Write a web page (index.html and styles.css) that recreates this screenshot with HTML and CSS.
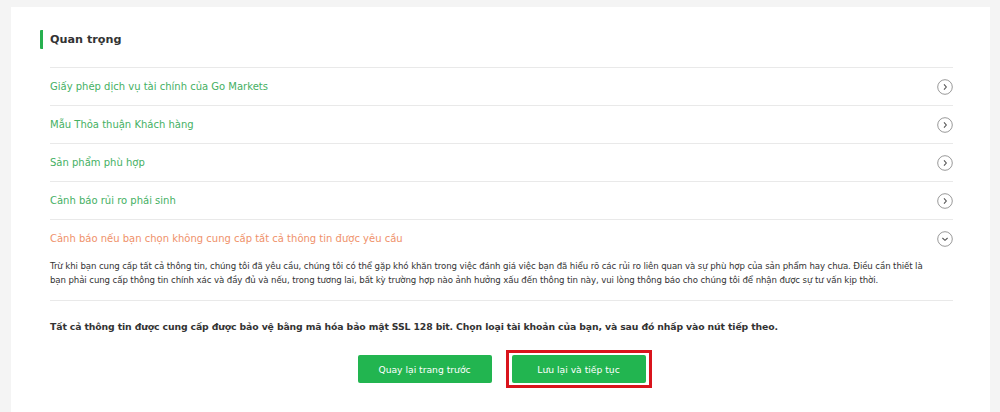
FILE: index.html
```html
<!DOCTYPE html>
<html>
<head>
<meta charset="utf-8">
<link rel="stylesheet" href="styles.css">
<title>Quan trọng</title>
</head>
<body>
	<div class="card">
		<h3 class="sectionTitle">Quan trọng</h3>

		<div class="docList">
			<div class="docRow">
				<span class="docLink">Giấy phép dịch vụ tài chính của Go Markets</span>
				<svg class="docIcon" viewBox="0 0 16 16"><circle cx="8" cy="8" r="7.3"/><path d="M7 5.4 L9.3 8 L7 10.6"/></svg>
			</div>
			<div class="docRow">
				<span class="docLink">Mẫu Thỏa thuận Khách hàng</span>
				<svg class="docIcon" viewBox="0 0 16 16"><circle cx="8" cy="8" r="7.3"/><path d="M7 5.4 L9.3 8 L7 10.6"/></svg>
			</div>
			<div class="docRow">
				<span class="docLink">Sản phẩm phù hợp</span>
				<svg class="docIcon" viewBox="0 0 16 16"><circle cx="8" cy="8" r="7.3"/><path d="M7 5.4 L9.3 8 L7 10.6"/></svg>
			</div>
			<div class="docRow">
				<span class="docLink">Cảnh báo rủi ro phái sinh</span>
				<svg class="docIcon" viewBox="0 0 16 16"><circle cx="8" cy="8" r="7.3"/><path d="M7 5.4 L9.3 8 L7 10.6"/></svg>
			</div>
			<div class="docRow open">
				<span class="docLink warn">Cảnh báo nếu bạn chọn không cung cấp tất cả thông tin được yêu cầu</span>
				<svg class="docIcon" viewBox="0 0 16 16"><circle cx="8" cy="8" r="7.3"/><path d="M5.4 7 L8 9.3 L10.6 7"/></svg>
			</div>
			<p class="docText">Trừ khi bạn cung cấp tất cả thông tin, chúng tôi đã yêu cầu, chúng tôi có thể gặp khó khăn trong việc đánh giá việc bạn đã hiểu rõ các rủi ro liên quan và sự phù hợp của sản phẩm hay chưa. Điều cần thiết là<br>bạn phải cung cấp thông tin chính xác và đầy đủ và nếu, trong tương lai, bất kỳ trường hợp nào ảnh hưởng xấu đến thông tin này, vui lòng thông báo cho chúng tôi để nhận được sự tư vấn kịp thời.</p>
		</div>

		<p class="sslNote">Tất cả thông tin được cung cấp được bảo vệ bằng mã hóa bảo mật SSL 128 bit. Chọn loại tài khoản của bạn, và sau đó nhấp vào nút tiếp theo.</p>

		<div class="actions">
			<button class="btn">Quay lại trang trước</button>
			<div class="highlight">
				<button class="btn">Lưu lại và tiếp tục</button>
			</div>
		</div>
	</div>
</body>
</html>
```

FILE: styles.css
```css
* {
	box-sizing: border-box;
}

body {
	margin: 0;
	padding: 7px 10px 0 11px;
	background: #f4f4f4;
	font-family: "DejaVu Sans", Verdana, sans-serif;
	color: #333;
}

.card {
	background: #fff;
	padding: 23px 37px 30px 29px;
	min-height: 420px;
}

.sectionTitle {
	margin: 0 0 18px;
	border-left: 3px solid #27b04f;
	border-radius: 1px;
	padding-left: 7px;
	height: 19px;
	line-height: 20px;
	font-size: 11.2px;
	font-weight: bold;
	color: #333;
}

.docList {
	margin-left: 10px;
	border-bottom: 1px solid #e9e9e9;
}

.docRow {
	display: flex;
	align-items: center;
	justify-content: space-between;
	height: 38px;
	border-top: 1px solid #e9e9e9;
}

.docLink {
	font-size: 10px;
	color: #45b063;
}

.docLink.warn {
	color: #ef916a;
}

.docIcon {
	width: 16px;
	height: 16px;
	fill: none;
	stroke-width: 1;
}

.docIcon circle {
	stroke: #999;
}

.docIcon path {
	stroke: #555;
	stroke-width: 1.1;
}

.docText {
	margin: 0;
	padding: 2px 0 13px;
	font-size: 8.6px;
	letter-spacing: -0.1px;
	line-height: 14px;
	color: #333;
	white-space: nowrap;
}

.sslNote {
	margin: 20px 0 0 10px;
	font-size: 9.3px;
	letter-spacing: -0.12px;
	font-weight: bold;
	color: #333;
}

.actions {
	display: flex;
	justify-content: center;
	align-items: center;
	gap: 14px;
	margin-top: 18px;
	padding-left: 16px;
}

.btn {
	width: 134px;
	height: 28px;
	border: none;
	border-radius: 2px;
	background: #22b550;
	color: #fff;
	font-family: inherit;
	font-size: 9.2px;
}

.highlight {
	border: 3px solid #d9141c;
	padding: 2px 3px;
}
```
